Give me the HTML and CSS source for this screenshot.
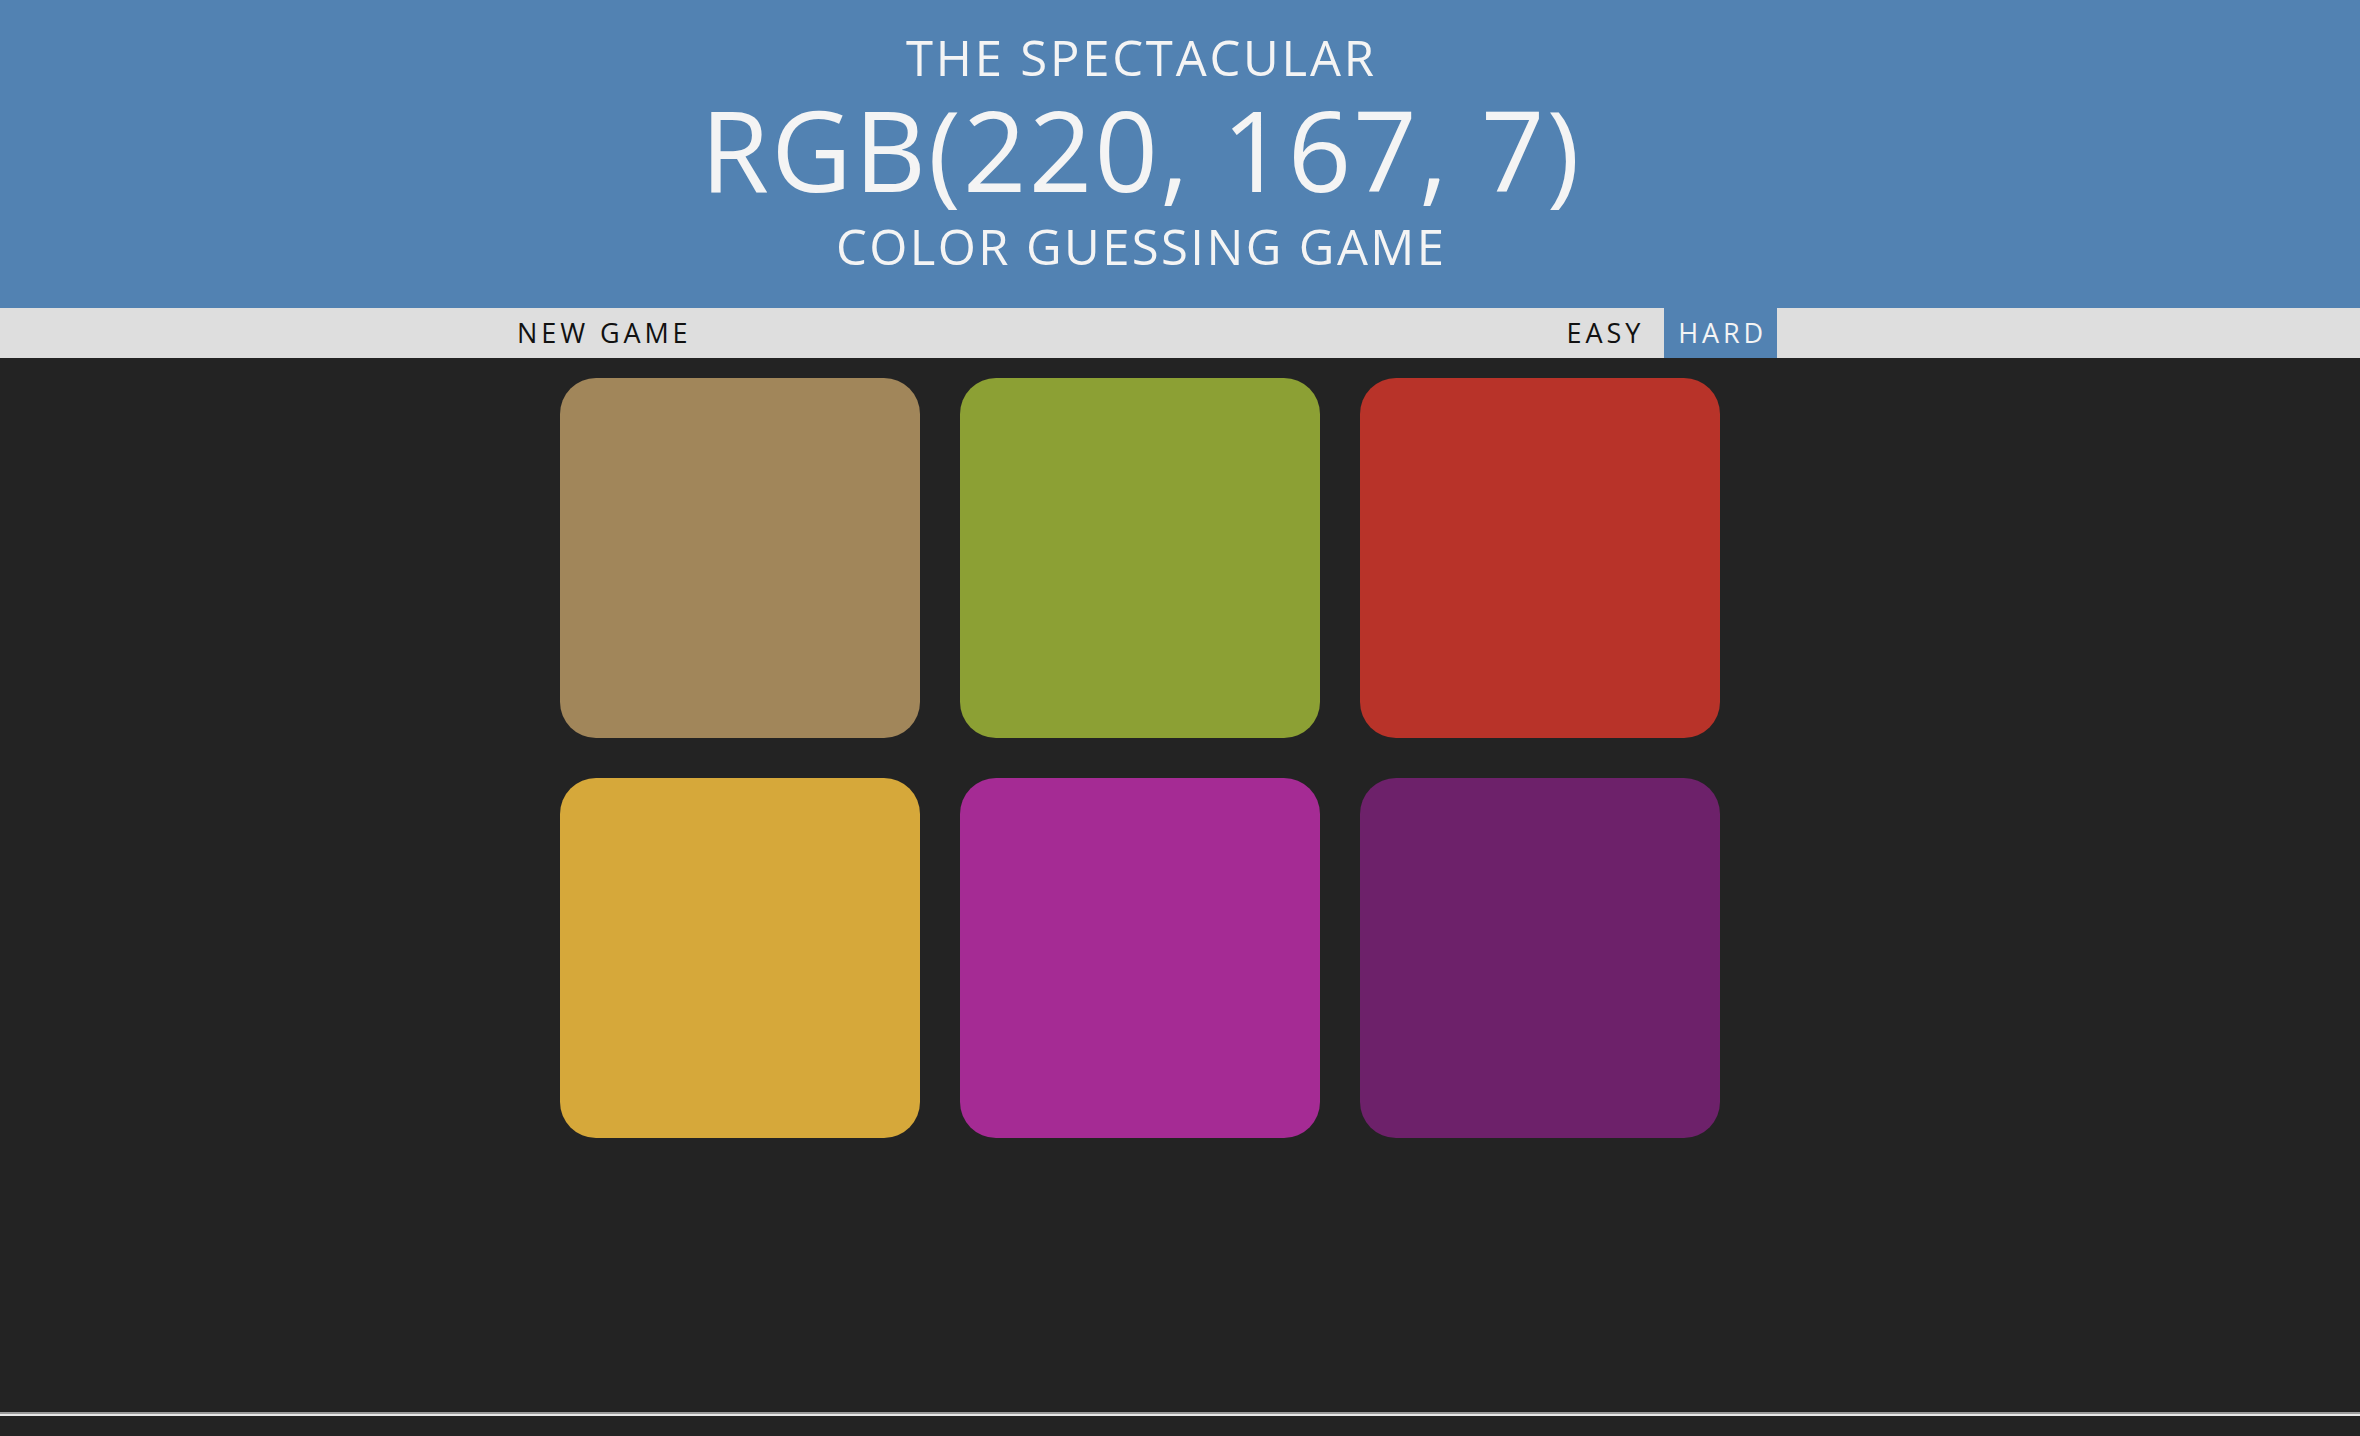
FILE: index.html
```html
<!DOCTYPE html>
<html lang="en">
<head>
<meta charset="utf-8">
<title>Color Game</title>
<link rel="stylesheet" href="styles.css">
</head>
<body>
  <header class="banner">
    <h1 class="title">
      <span class="title-small">The Spectacular</span>
      <span class="title-large">RGB(220, 167, 7)</span>
      <span class="title-small title-bottom">Color Guessing Game</span>
    </h1>
  </header>
  <nav class="stripe">
    <div class="stripe-inner">
      <button class="btn">New Game</button>
      <div class="modes">
        <button class="btn">Easy</button>
        <button class="btn selected">Hard</button>
      </div>
    </div>
  </nav>
  <main class="board">
    <div class="grid">
      <div class="square sq-tan"></div>
      <div class="square sq-green"></div>
      <div class="square sq-red"></div>
      <div class="square sq-yellow"></div>
      <div class="square sq-magenta"></div>
      <div class="square sq-purple"></div>
    </div>
  </main>
  <div class="bottom-rule"></div>
</body>
</html>
```

FILE: styles.css
```css
* { box-sizing: border-box; }

html, body {
  margin: 0;
  padding: 0;
}

body {
  background: #232323;
  font-family: "Open Sans", "Liberation Sans", sans-serif;
  height: 1436px;
  display: flex;
  flex-direction: column;
  overflow: hidden;
}

.banner {
  background: #5282b2;
  height: 308px;
  padding: 33px 80px 0 0;
}

.title {
  margin: 0;
  font-weight: 400;
  text-transform: uppercase;
  color: #f4f4f4;
  display: flex;
  flex-direction: column;
  align-items: center;
}

.title-small {
  font-size: 49px;
  line-height: 49px;
  letter-spacing: 2.8px;
  margin-right: -2.8px;
}

.title-large {
  font-size: 111px;
  line-height: 111px;
  margin-top: 12px;
  letter-spacing: 2.2px;
  margin-right: -2.2px;
}

.title-bottom {
  margin-top: 17px;
  letter-spacing: 2.4px;
  margin-right: -2.4px;
}

.stripe {
  background: #dedede;
  height: 50px;
  padding-right: 80px;
}

.stripe-inner {
  width: 1274px;
  margin: 0 auto;
  height: 100%;
  display: flex;
  justify-content: space-between;
  align-items: stretch;
}

.modes {
  display: flex;
  gap: 10px;
}

.btn {
  border: none;
  background: transparent;
  font-family: inherit;
  font-size: 27px;
  letter-spacing: 3.9px;
  text-transform: uppercase;
  color: #111;
  padding: 0 10px 0 14px;
  margin: 0;
  height: 50px;
  line-height: 50px;
}

.btn.selected {
  background: #5282b2;
  color: #f4f4f4;
}

.board {
  flex: 1;
  padding: 20px 80px 0 0;
}

.grid {
  width: 1160px;
  margin: 0 auto;
  display: grid;
  grid-template-columns: repeat(3, 360px);
  grid-auto-rows: 360px;
  gap: 40px;
}

.square {
  border-radius: 36px;
}

.sq-tan { background: #a1865a; }
.sq-green { background: #8ca034; }
.sq-red { background: #b83329; }
.sq-yellow { background: #d6a83a; }
.sq-magenta { background: #a52b94; }
.sq-purple { background: #6d216a; }

.bottom-rule {
  height: 4px;
  border-top: 2px solid #9a9a9a;
  border-bottom: 2px solid #e8e8e8;
  margin-bottom: 20px;
}
```
